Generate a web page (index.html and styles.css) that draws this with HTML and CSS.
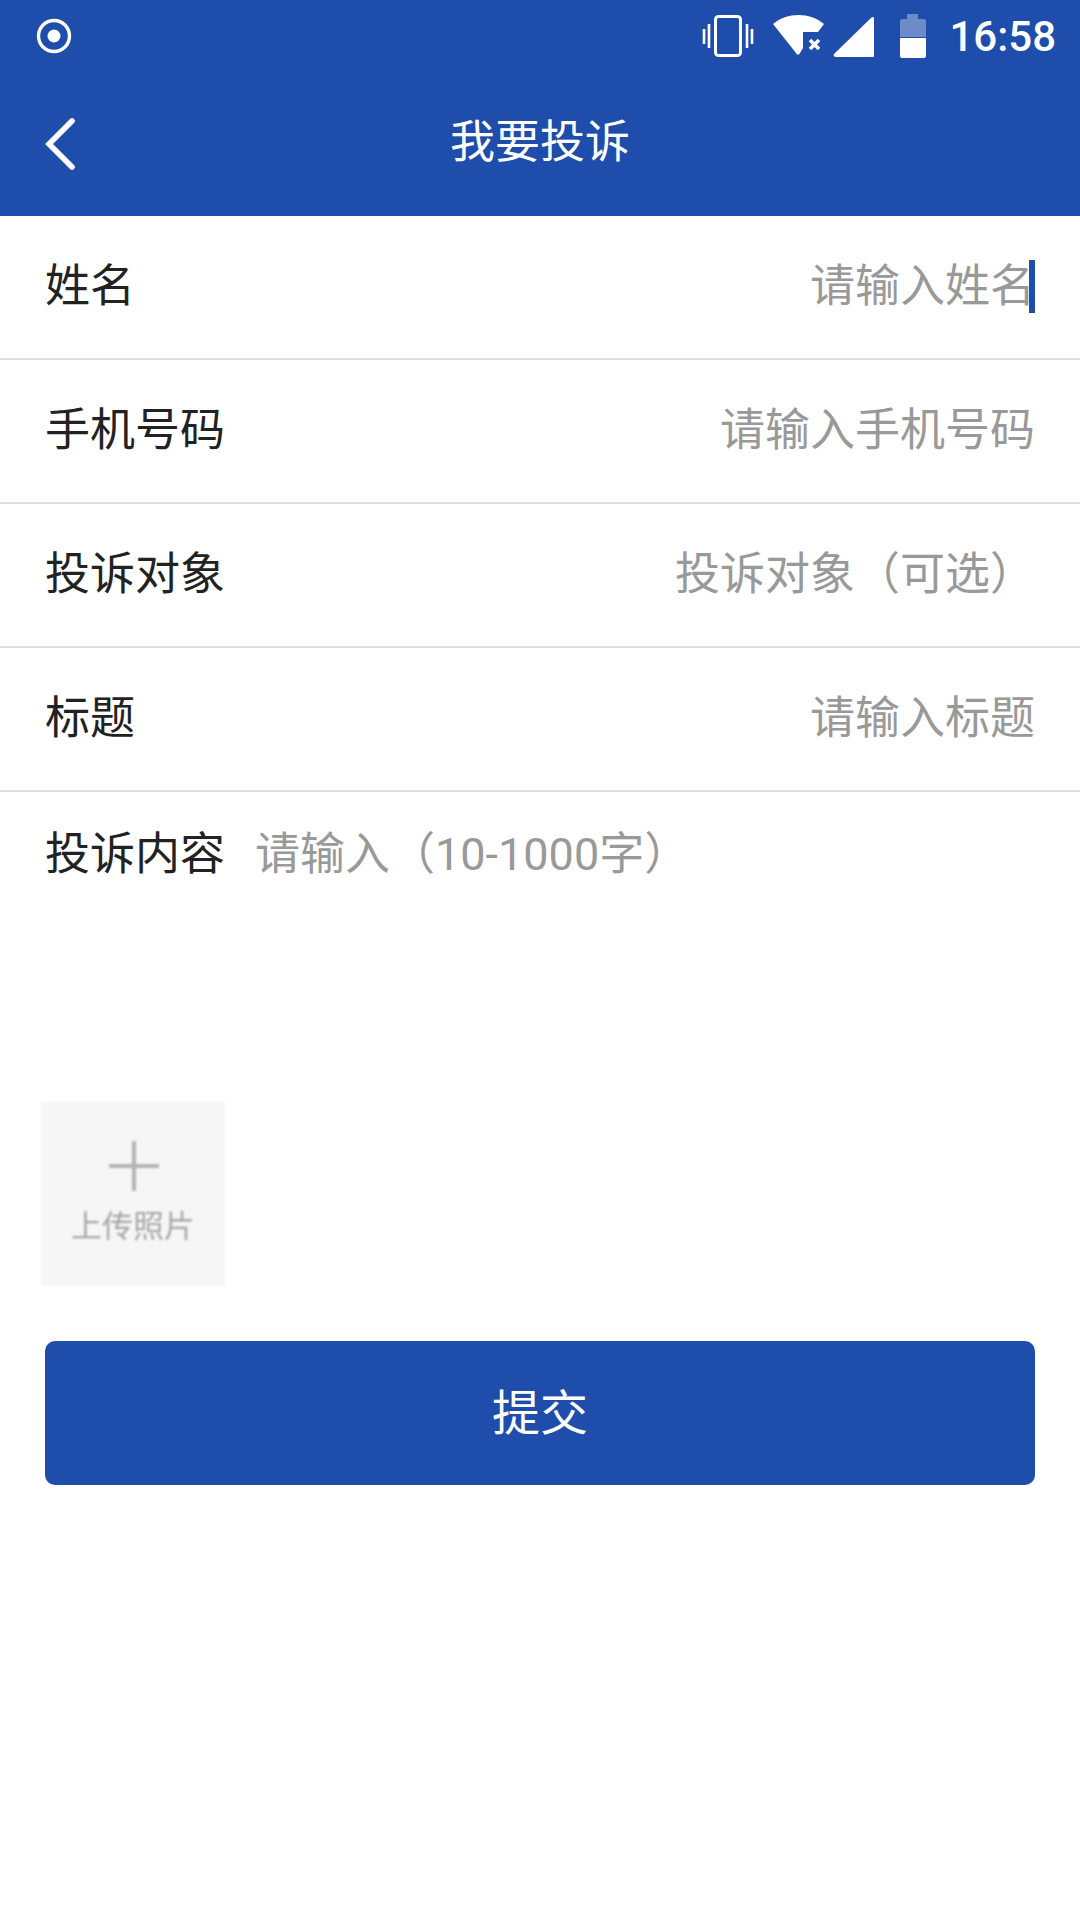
FILE: index.html
```html
<!DOCTYPE html>
<html lang="zh-CN">
<head>
<meta charset="utf-8">
<title>我要投诉</title>
<link rel="stylesheet" href="styles.css">
</head>
<body>
<header class="top">
  <div class="status">
    <svg class="rec" viewBox="0 0 36 36"><circle cx="18" cy="18" r="15.5" fill="none" stroke="#fff" stroke-width="3.4"/><circle cx="18" cy="18" r="6.5" fill="#fff"/></svg>
    <div class="status-right">
      <svg class="ic-vib" viewBox="0 0 54 44"><rect x="14.5" y="2.5" width="25" height="39" rx="3" fill="none" stroke="#fff" stroke-width="3"/><path d="M8 10v24M3 15v15M46 10v24M51 15v15" stroke="#fff" stroke-width="2.6" fill="none"/></svg>
      <svg class="ic-wifi" viewBox="0 0 54 44"><path d="M0 10C14 -2 37 -2 51 10L45 18H30V34L27 39C26 41 24 41 23 39Z" fill="#fff"/><path d="M37 26l9 9M46 26l-9 9" stroke="#fff" stroke-width="3.6" fill="none"/></svg>
      <svg class="ic-sig" viewBox="0 0 42 42"><path d="M40 1C41 1 41 2 41 3V40C41 41 40 41 39 41H3C1 41 0 39 1 38L38 2C39 1 39 1 40 1Z" fill="#fff"/></svg>
      <svg class="ic-bat" viewBox="0 0 26 44"><path d="M7 0H18V5H24C25 5 26 6 26 7V23H0V7C0 6 1 5 2 5H7Z" fill="#fff" opacity=".35"/><path d="M0 24H26V42C26 43 25 44 24 44H2C1 44 0 43 0 42Z" fill="#fff"/></svg>
      <span class="time">16:58</span>
    </div>
  </div>
  <div class="nav">
    <svg class="back" viewBox="0 0 34 54"><path d="M30 4L7 27L30 50" fill="none" stroke="#fff" stroke-width="5.6" stroke-linecap="round" stroke-linejoin="miter"/></svg>
    <h1 class="title">我要投诉</h1>
  </div>
</header>
<main class="form">
  <div class="row"><span class="label">姓名</span><span class="hint">请输入姓名</span><i class="caret"></i></div>
  <div class="row"><span class="label">手机号码</span><span class="hint">请输入手机号码</span></div>
  <div class="row"><span class="label">投诉对象</span><span class="hint">投诉对象（可选）</span></div>
  <div class="row"><span class="label">标题</span><span class="hint">请输入标题</span></div>
  <div class="content"><span class="label">投诉内容</span><span class="hint">请输入（10-1000字）</span></div>
  <div class="upload">
    <svg class="plus" viewBox="0 0 50 50"><path d="M25 0V50M0 25H50" stroke="#b4b4b4" stroke-width="4" fill="none"/></svg>
    <span class="upload-text">上传照片</span>
  </div>
  <button class="submit">提交</button>
</main>
</body>
</html>
```
FILE: styles.css
```css
* { box-sizing: border-box; }
html, body { margin: 0; padding: 0; }
body {
  width: 1080px;
  height: 1920px;
  background: #fff;
  font-family: Roboto, "Noto Sans CJK SC", sans-serif;
  overflow: hidden;
}
.top { background: #1f4dab; height: 216px; color: #fff; display: flex; flex-direction: column; }
.status { height: 72px; display: flex; align-items: center; justify-content: space-between; padding: 0 24px 0 36px; }
.rec { width: 36px; height: 36px; }
.status-right { display: flex; align-items: center; }
.ic-vib { width: 54px; height: 44px; margin-right: 18px; }
.ic-wifi { width: 54px; height: 44px; margin-right: 6px; }
.ic-sig { width: 42px; height: 42px; margin-top: 2px; margin-right: 25px; }
.ic-bat { width: 26px; height: 44px; margin-right: 23px; }
.time { font-size: 42px; font-weight: 500; line-height: 44px; padding-top: 1px; }
.nav { flex: 1; position: relative; display: flex; align-items: center; justify-content: center; padding-bottom: 2px; }
.back { position: absolute; left: 42px; top: 45px; width: 34px; height: 54px; }
.title { margin: 0; font-size: 45px; font-weight: 400; line-height: 60px; }
.form { display: flex; flex-direction: column; }
.row { height: 144px; border-bottom: 2px solid #dcdfea; padding: 0 45px; display: flex; align-items: center; position: relative; }
.label { font-size: 45px; color: #222; line-height: 60px; white-space: nowrap; }
.hint { font-size: 45px; color: #999; line-height: 60px; white-space: nowrap; }
.row .hint { margin-left: auto; }
.caret { position: absolute; left: 1029px; top: 44px; width: 6px; height: 53px; background: #1f4dab; }
.content { height: 310px; padding: 33px 45px 0; display: flex; align-items: flex-start; gap: 30px; }
.upload { margin-left: 41px; width: 184px; height: 184px; background: #f6f6f6; display: flex; flex-direction: column; align-items: center; filter: blur(.8px); }
.plus { width: 50px; height: 50px; margin-top: 39px; margin-left: 1px; }
.upload-text { font-size: 31px; line-height: 40px; margin-top: 16px; color: #a6a6a6; }
.submit { margin: 55px 45px 0; height: 144px; border: 0; border-radius: 10px; background: #1f4dab; color: #fff; font: 400 48px/60px Roboto, "Noto Sans CJK SC", sans-serif; padding: 1px 0 0; }
```
